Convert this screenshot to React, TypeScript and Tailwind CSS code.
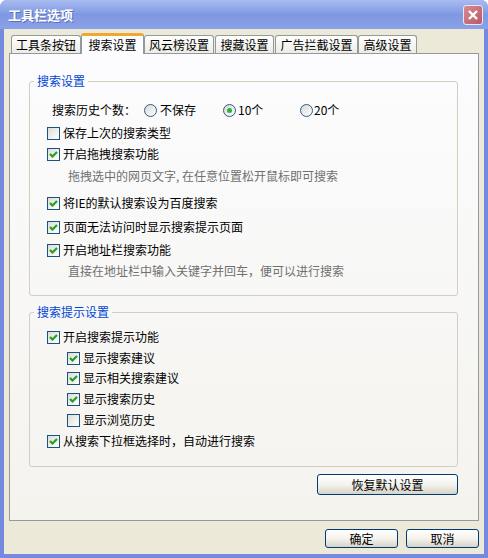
const font = "font-['Noto_Sans_CJK_SC','Noto_Sans',sans-serif]";

const tabs = [
    { id: 0, label: "工具条按钮", width: "w-[70px]", ml: "ml-[2px]" },
    { id: 1, label: "搜索设置", width: "w-[63px]", ml: "ml-0", active: true },
    { id: 2, label: "风云榜设置", width: "w-[70px]", ml: "ml-0" },
    { id: 3, label: "搜藏设置", width: "w-[59px]", ml: "ml-[1px]" },
    { id: 4, label: "广告拦截设置", width: "w-[83px]", ml: "ml-[1px]" },
    { id: 5, label: "高级设置", width: "w-[59px]", ml: "ml-0" },
];

const Check = ({ checked }: { checked?: boolean }) => (
    <span className="w-[13px] h-[13px] shrink-0 border border-[#1c5180] bg-gradient-to-br from-[#dcdcd7] to-[#ffffff] flex items-center justify-center">
        {checked && (
            <svg width="11" height="11" viewBox="0 0 11 11">
                <polyline points="2,5 4.5,7.5 9,3" fill="none" stroke="#21a121" strokeWidth="2.2" />
            </svg>
        )}
    </span>
);

const Radio = ({ checked }: { checked?: boolean }) => (
    <span className="w-[13px] h-[13px] shrink-0 rounded-full border border-[#2f5a8c] bg-gradient-to-br from-[#d8d8d2] to-[#ffffff] flex items-center justify-center">
        {checked && <span className="w-[5px] h-[5px] rounded-full bg-[#2fb42f]" />}
    </span>
);

const CheckRow = ({ label, checked, indent, mt }: { label: string; checked?: boolean; indent?: boolean; mt: string }) => (
    <div className={`h-[20px] flex items-center gap-[3px] ${mt} ${indent ? "pl-[37px]" : "pl-[17px]"}`}>
        <Check checked={checked} />
        <span className="text-[12px] leading-none text-black">{label}</span>
    </div>
);

const Note = ({ text, mt }: { text: string; mt: string }) => (
    <div className={`h-[20px] flex items-center pl-[38px] ${mt}`}>
        <span className="text-[12px] leading-none text-[#707070]">{text}</span>
    </div>
);

const XPButton = ({ label, className }: { label: string; className: string }) => (
    <button className={`border border-[#003c74] rounded-[3px] bg-gradient-to-b from-[#ffffff] via-[#f4f3ee] to-[#d8d3c6] flex items-center justify-center text-[12px] leading-none text-black ${className}`}>
        {label}
    </button>
);

const App = () => {
    return (
        <div className={`w-[488px] h-[558px] flex flex-col rounded-t-[7px] bg-[#7489e0] overflow-hidden ${font}`}>
            <div className="h-[29px] shrink-0 flex items-center justify-between pl-[8px] pr-[5px] bg-gradient-to-b from-[#a9bcf0] via-[#7f98e2] to-[#8aa1e6]">
                <span className="text-white text-[13px] font-bold leading-none [text-shadow:1px_1px_0_#5a6fb8]">工具栏选项</span>
                <span className="w-[20px] h-[20px] rounded-[3px] border border-[#e8e8f4] bg-gradient-to-br from-[#d98a92] to-[#b85a66] flex items-center justify-center">
                    <svg width="12" height="12" viewBox="0 0 12 12">
                        <path d="M2 2 L10 10 M10 2 L2 10" stroke="#ffffff" strokeWidth="2.4" />
                    </svg>
                </span>
            </div>
            <div className="flex-1 mx-[4px] mb-[4px] bg-[#ece9d8] px-[5px] pt-[4px] flex flex-col">
                <div className="h-[20px] flex items-end">
                    {tabs.map((tab) =>
                        tab.active ? (
                            <div
                                key={tab.id}
                                className={`${tab.width} ${tab.ml} h-[21px] -mb-[1px] relative z-10 border-x border-[#919b9c] border-t-[3px] border-t-[#f0a832] rounded-t-[3px] bg-[#fcfcfe] flex items-center justify-center text-[12px] leading-none text-black`}
                            >
                                {tab.label}
                            </div>
                        ) : (
                            <div
                                key={tab.id}
                                className={`${tab.width} ${tab.ml} h-[18px] border-x border-t border-[#919b9c] rounded-t-[3px] bg-gradient-to-b from-[#ffffff] to-[#ecebe6] flex items-center justify-center text-[12px] leading-none text-black`}
                            >
                                {tab.label}
                            </div>
                        )
                    )}
                </div>
                <div className="h-[468px] border border-[#919b9c] bg-gradient-to-b from-[#fcfcfe] to-[#f4f3ee] pl-[19px] pr-[20px] flex flex-col">
                    <fieldset className="mt-[20px] border border-[#d0d0bf] rounded-[3px] pb-[14px] min-w-0">
                        <legend className="ml-[4px] px-[3px] text-[12px] leading-[14px] text-[#0046d5]">搜索设置</legend>
                        <div className="h-[20px] flex items-center mt-[12px] pl-[22px]">
                            <span className="text-[12px] leading-none w-[92px]">搜索历史个数：</span>
                            <Radio />
                            <span className="text-[12px] leading-none ml-[3px] w-[63px]">不保存</span>
                            <Radio checked />
                            <span className="text-[12px] leading-none ml-[2px] w-[62px]">10个</span>
                            <Radio />
                            <span className="text-[12px] leading-none ml-[1px]">20个</span>
                        </div>
                        <CheckRow label="保存上次的搜索类型" mt="mt-[3px]" />
                        <CheckRow label="开启拖拽搜索功能" checked mt="mt-[1px]" />
                        <Note text="拖拽选中的网页文字, 在任意位置松开鼠标即可搜索" mt="mt-[2px]" />
                        <CheckRow label="将IE的默认搜索设为百度搜索" checked mt="mt-[7px]" />
                        <CheckRow label="页面无法访问时显示搜索提示页面" checked mt="mt-[4px]" />
                        <CheckRow label="开启地址栏搜索功能" checked mt="mt-[3px]" />
                        <Note text="直接在地址栏中输入关键字并回车，便可以进行搜索" mt="mt-[1px]" />
                    </fieldset>
                    <fieldset className="mt-[9px] border border-[#d0d0bf] rounded-[3px] pb-[15px] min-w-0">
                        <legend className="ml-[4px] px-[3px] text-[12px] leading-[14px] text-[#0046d5]">搜索提示设置</legend>
                        <CheckRow label="开启搜索提示功能" checked mt="mt-[8px]" />
                        <CheckRow label="显示搜索建议" checked indent mt="mt-[1px]" />
                        <CheckRow label="显示相关搜索建议" checked indent mt="mt-0" />
                        <CheckRow label="显示搜索历史" checked indent mt="mt-[1px]" />
                        <CheckRow label="显示浏览历史" indent mt="mt-[1px]" />
                        <CheckRow label="从搜索下拉框选择时，自动进行搜索" checked mt="mt-[1px]" />
                    </fieldset>
                    <div className="flex justify-end mt-[7px]">
                        <XPButton label="恢复默认设置" className="w-[141px] h-[21px]" />
                    </div>
                </div>
                <div className="flex justify-end gap-[8px] mt-[8px]">
                    <XPButton label="确定" className="w-[73px] h-[19px]" />
                    <XPButton label="取消" className="w-[73px] h-[19px]" />
                </div>
            </div>
        </div>
    );
};

export default App;
